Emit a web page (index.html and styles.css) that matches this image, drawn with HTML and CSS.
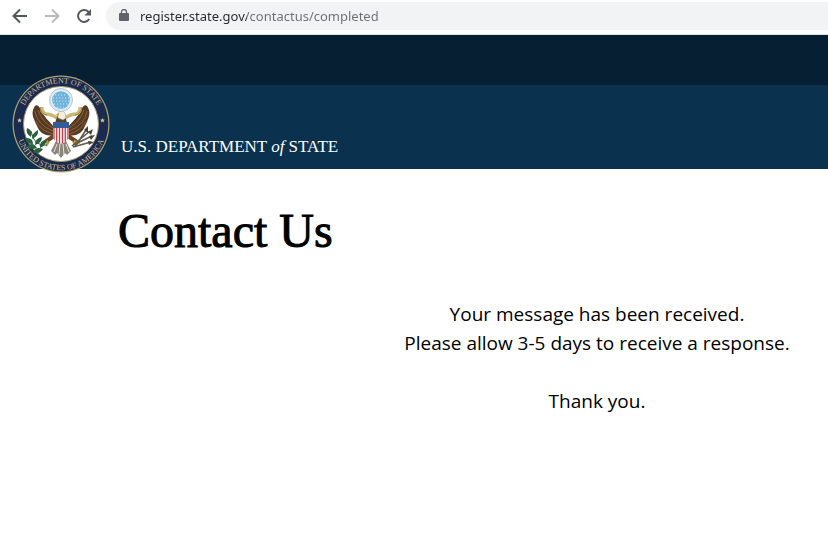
FILE: index.html
```html
<!DOCTYPE html>
<html lang="en">

<head>
    <meta charset="utf-8">
    <meta name="viewport" content="width=device-width, initial-scale=1.0">
    <title>Contact Us</title>
    <link rel="stylesheet" href="styles.css">
</head>

<body>

    <div class="toolbar">
        <button class="tool" aria-label="Back">
            <svg viewBox="0 0 16 16"><path d="M15 8H2M8 1.500L1.500 8 8 14.500" /></svg>
        </button>
        <button class="tool forward" aria-label="Forward" disabled>
            <svg viewBox="0 0 16 16"><path d="M1 8h13M8 1.500L14.500 8 8 14.500" /></svg>
        </button>
        <button class="tool" aria-label="Reload">
            <svg viewBox="0 0 16 16">
                <path d="M13.200 11A6 6 0 1 1 12.300 3.700L14 5.500" />
                <path class="solid" d="M15 1v6.500H8.500z" />
            </svg>
        </button>
        <div class="address">
            <svg class="lock" viewBox="0 0 10 13">
                <rect x="0" y="4" width="10" height="8" rx="1" fill="#5f6368" />
                <path d="M2.500 5V3a2.500 2.500 0 0 1 5 0v2" fill="none" stroke="#5f6368" stroke-width="1.300" />
            </svg>
            <input class="url" type="text" aria-label="Address" value="register.state.gov/contactus/completed">
        </div>
    </div>

    <header>
        <div class="topbar"></div>
        <div class="banner">
            <svg class="seal" viewBox="0 0 98 98" role="img" aria-label="Department of State seal">
                <defs>
                    <path id="arcTop" d="M9 55A40.500 40.500 0 1 1 89 55" />
                    <path id="arcBottom" d="M4 43A45.500 45.500 0 1 0 94 43" />
                    <clipPath id="shieldClip">
                        <path d="M41 47h16v14q0 5-8 8q-8-3-8-8z" />
                    </clipPath>
                </defs>
                <circle cx="49" cy="49" r="48.500" fill="#b0a373" />
                <circle cx="49" cy="49" r="47.300" fill="#1b2b50" />
                <circle cx="49" cy="49" r="37.500" fill="#fff" stroke="#a4986d" />
                <g class="seal-text">
                    <text><textPath href="#arcTop" startOffset="50%">DEPARTMENT OF STATE</textPath></text>
                    <text><textPath href="#arcBottom" startOffset="50%">UNITED STATES OF AMERICA</textPath></text>
                </g>
                <g fill="#d5c894">
                    <path d="M7.500 43l.7 1.600 1.700.1-1.300 1.100.4 1.700-1.500-.9-1.500.9.400-1.700-1.300-1.100 1.700-.1z" />
                    <path d="M90.500 43l.7 1.600 1.700.1-1.300 1.100.4 1.700-1.500-.9-1.500.9.400-1.700-1.300-1.100 1.700-.1z" />
                </g>

                <!-- wings -->
                <path fill="#573a23" d="M42 52C37 46 32 42 29 35c-2-4-4-6-6-4-3 4-3 9-1 13l1 3 2 4 2 4 3 3 4 2 8 1zM56 52c5-6 10-10 13-17 2-4 4-6 6-4 3 4 3 9 1 13l-1 3-2 4-2 4-3 3-4 2-8 1z" />
                <path fill="none" stroke="#9a6f3e" stroke-width=".8" d="M23 36q2 14 18 20M24 46q5 10 17 13M26 35q4 12 15 18M75 36q-2 14-18 20M74 46q-5 10-17 13M72 35q-4 12-15 18" />
                <!-- tail and legs -->
                <path fill="#8a8479" d="M44 66h10l5 10-4 4-2-2-4 5-4-5-2 2-4-4z" />
                <path fill="none" stroke="#eeeae0" stroke-width=".9" d="M45 69l-3 8M48 69l-1 11M51 69l1 11M54 69l3 8" />
                <path fill="none" stroke="#694326" stroke-width="4" d="M42 61l-9 6M56 61l9 6" />
                <path fill="none" stroke="#c29b43" stroke-width="2" d="M36 66l-6 2M37 67l-3 4M62 66l6 2M61 67l3 4" />
                <!-- ribbon -->
                <path fill="none" stroke="#c9b878" stroke-width="3.500" d="M30 32q-1 5 4 7 5 0 11 4M68 32q1 5-4 7-5 0-11 4" />
                <path fill="none" stroke="#81723f" stroke-width=".7" d="M28 32q1 7 7 8M70 32q-1 7-7 8" />
                <!-- head -->
                <path fill="#56402c" d="M43 48l2-6 3-4q4-2 5 2l2 8z" />
                <path fill="#f1eee2" stroke="#9b907a" stroke-width=".5" d="M46 43q-1-6 3-7 5 0 5 7l-3 2z" />
                <path fill="#d0a33d" d="M47 38l-4 2 4 1z" />
                <!-- glory -->
                <circle cx="49" cy="25" r="11.500" fill="#ddecf4" stroke="#a3bbc6" stroke-width=".8" />
                <circle cx="49" cy="25" r="8.800" fill="#6eb2da" />
                <path fill="none" stroke="#cfe6f2" stroke-width="1.100" stroke-dasharray="1.200 1.800" d="M43 20h12M41 23h16M41 26h16M42 29h14M45 32h8" />
                <!-- shield -->
                <g clip-path="url(#shieldClip)">
                    <path fill="#f5eeee" d="M41 47h16v22H41z" />
                    <path stroke="#c1404d" stroke-width="1.300" d="M42 47v22M44.700 47v22M47.500 47v22M50.500 47v22M53.300 47v22M56 47v22" />
                    <path fill="#315d99" d="M41 47h16v6H41z" />
                </g>
                <!-- olive branch -->
                <g transform="translate(-1 5)">
                    <path fill="none" stroke="#356044" d="M36 65Q23 67 20 51" />
                    <path fill="#28613e" d="M20 57q-6-4-4-9 6 2 4 9zM21 59q7-3 6-9-6 3-6 9zM22 64q-7 0-8-6 8-1 8 6zM24 65q7-2 7-8-7 1-7 8zM26 68q-7 3-10-2 6-5 10 2zM29 68q6-3 7-8-8 0-7 8zM32 69q-5 7-10 3 3-6 10-3z" />
                </g>
                <!-- arrows -->
                <path fill="none" stroke="#625b4b" stroke-width="1.600" d="M60 71l18-15M61 70l19-9M61 72l18-5M63 72l11-17" />
                <path fill="#45443b" d="M72 55l4-4v7zM76 57l5-3-2 6zM77 61l6-1-4 5zM76 66l6 1-5 3z" />
            </svg>
            <a class="department" href="#">U.S. DEPARTMENT <i>of</i> STATE</a>
        </div>
    </header>

    <main>
        <h1>Contact Us</h1>
        <section class="message">
            <p>Your message has been received.<br>Please allow 3-5 days to receive a response.</p>
            <p>Thank you.</p>
        </section>
    </main>

</body>

</html>
```
FILE: styles.css
```css
* {
    box-sizing: border-box;
}

body {
    margin: 0;
    background: #fff;
    color: #000;
    font-family: "Open Sans", sans-serif;
}

.toolbar {
    display: flex;
    align-items: center;
    gap: 16px;
    height: 35px;
    padding: 0 0 3px 12px;
    border-bottom: 1px solid #dfe3e6;
}

.tool {
    width: 16px;
    height: 16px;
    padding: 0;
    border: 0;
    background: none;
    color: #55585c;
}

.tool svg {
    display: block;
    fill: none;
    stroke: currentColor;
    stroke-width: 2;
}

.tool .solid {
    fill: currentColor;
    stroke: none;
}

.forward {
    color: #b9bbbd;
}

.address {
    flex: 1;
    display: flex;
    align-items: center;
    gap: 11px;
    height: 28px;
    margin-left: -2px;
    padding-left: 13px;
    border-radius: 14px 0 0 14px;
    background: #f1f3f4;
}

.lock {
    width: 10px;
    height: 13px;
}

.url {
    flex: 1;
    height: 24px;
    padding: 0;
    border: 0;
    outline: 0;
    /* host is darker than the path */
    background: linear-gradient(90deg, #27292c 107px, #6b6f74 107px);
    -webkit-background-clip: text;
    background-clip: text;
    color: transparent;
    font-family: "Noto Sans", sans-serif;
    font-size: 13px;
}

.topbar {
    height: 50px;
    background: #061f33;
}

.banner {
    position: relative;
    display: flex;
    align-items: center;
    height: 84px;
    padding: 40px 0 0 121px;
    background: #0a314d;
}

.seal {
    position: absolute;
    top: -10px;
    left: 12px;
    width: 98px;
    height: 98px;
}

.seal-text {
    fill: #cabd8b;
    font-family: "Liberation Serif", serif;
    font-size: 8px;
    text-anchor: middle;
}

.department {
    color: #fff;
    font-family: "Liberation Serif", serif;
    font-size: 17px;
    text-decoration: none;
}

main {
    padding-left: 118px;
}

h1 {
    margin: 32px 0 0;
    font-family: "Liberation Serif", serif;
    font-size: 48px;
    font-weight: normal;
    line-height: 60px;
    -webkit-text-stroke: 1px #000;
}

.message {
    margin: 39px 0 0 248px;
    font-size: 19px;
    line-height: 29px;
    text-align: center;
}

.message p {
    margin: 0 0 29px;
}
```
